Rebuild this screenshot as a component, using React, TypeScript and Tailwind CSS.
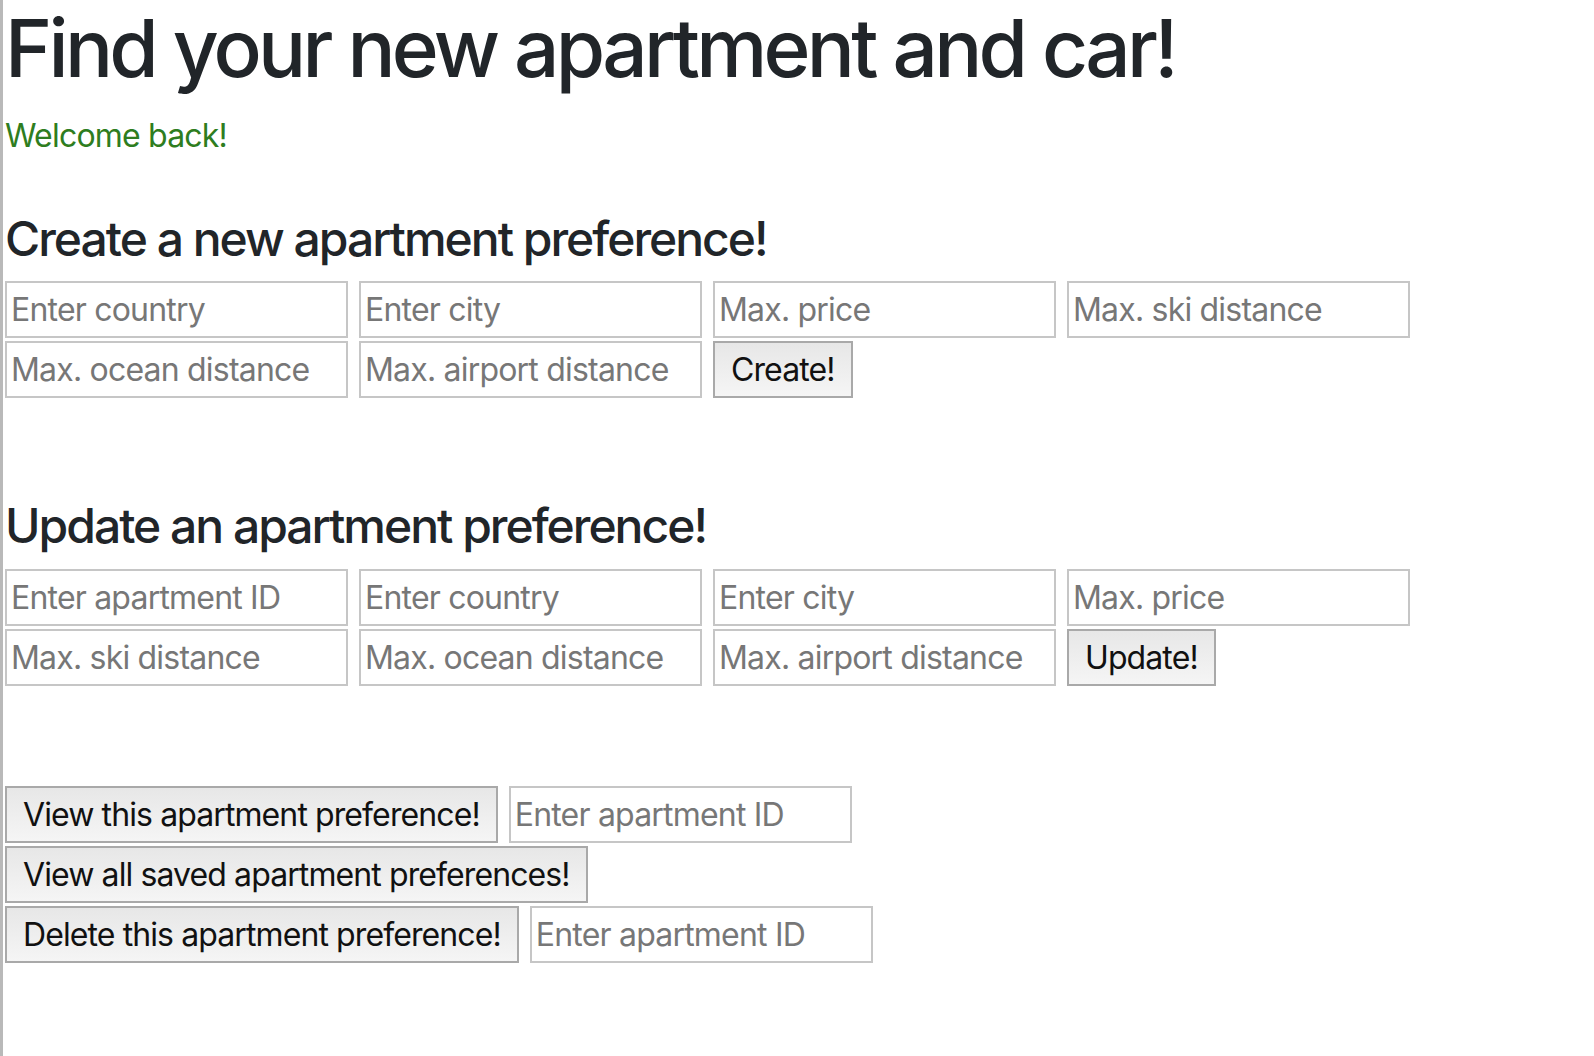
import { ReactNode } from "react";

const font = "font-['Inter','Noto_Sans',sans-serif]";

function Field({ placeholder }: { placeholder: string }) {
  return (
    <input
      type="text"
      placeholder={placeholder}
      className={`${font} w-[343px] h-[57px] border-2 border-[#c6c6c6] bg-white px-1 text-[32px] tracking-[-0.8px] text-[#212529] placeholder:text-[#777777] outline-none`}
    />
  );
}

function Btn({ children }: { children: ReactNode }) {
  return (
    <button
      className={`${font} h-[57px] border-2 border-[#a9a9a9] bg-gradient-to-b from-[#e7e7e7] to-[#f5f5f5] px-4 text-[32px] tracking-[-0.9px] text-[#111111]`}
    >
      {children}
    </button>
  );
}

function App() {
  return (
    <div className={`${font} min-h-screen w-full bg-white border-l-[3px] border-[#b9b9b9] pl-[2px] text-[#212529]`}>
      <h1 className="text-[80px] leading-[96px] font-medium tracking-[-3.7px] mb-4">
        Find your new apartment and car!
      </h1>
      <p className="text-[32px] leading-[48px] tracking-[-0.8px] text-[#2e7d20]">Welcome back!</p>

      <h4 className="mt-[50px] text-[48px] leading-[58px] font-medium tracking-[-2px] mb-[13px]">
        Create a new apartment preference!
      </h4>
      <div className="flex flex-wrap gap-x-[11px] gap-y-[3px]">
        <Field placeholder="Enter country" />
        <Field placeholder="Enter city" />
        <Field placeholder="Max. price" />
        <Field placeholder="Max. ski distance" />
        <Field placeholder="Max. ocean distance" />
        <Field placeholder="Max. airport distance" />
        <Btn>Create!</Btn>
      </div>

      <h4 className="mt-[99px] text-[48px] leading-[58px] font-medium tracking-[-2px] mb-[14px]">
        Update an apartment preference!
      </h4>
      <div className="flex flex-wrap gap-x-[11px] gap-y-[3px]">
        <Field placeholder="Enter apartment ID" />
        <Field placeholder="Enter country" />
        <Field placeholder="Enter city" />
        <Field placeholder="Max. price" />
        <Field placeholder="Max. ski distance" />
        <Field placeholder="Max. ocean distance" />
        <Field placeholder="Max. airport distance" />
        <Btn>Update!</Btn>
      </div>

      <div className="mt-[100px] flex flex-col gap-[3px]">
        <div className="flex gap-[11px]">
          <Btn>View this apartment preference!</Btn>
          <Field placeholder="Enter apartment ID" />
        </div>
        <div className="flex">
          <Btn>View all saved apartment preferences!</Btn>
        </div>
        <div className="flex gap-[11px]">
          <Btn>Delete this apartment preference!</Btn>
          <Field placeholder="Enter apartment ID" />
        </div>
      </div>
    </div>
  );
}

export default App;
